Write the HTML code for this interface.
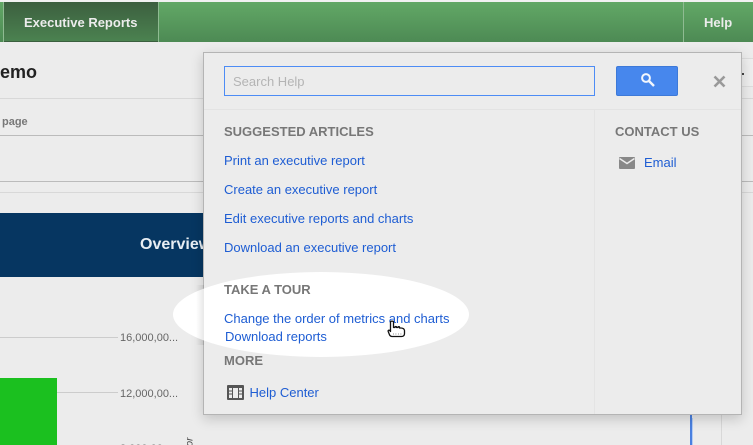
<!DOCTYPE html>
<html>
<head>
<meta charset="utf-8">
<style>
html,body{margin:0;padding:0;width:753px;height:445px;overflow:hidden}
body{background:#ececec;font-family:"Liberation Sans",sans-serif}
#w{position:absolute;left:0;top:0;width:753px;height:445px;overflow:hidden;background:#ececec}
.a{position:absolute}
.t{position:absolute;white-space:nowrap;line-height:16px}
.l{color:#1e5dd3;font-size:13px}
.h{color:#777;font-size:13px;font-weight:bold}
</style>
</head>
<body>
<div id="w">
<!-- top bar -->
<div class="a" style="left:0;top:0;width:753px;height:2px;background:#f2f2f2"></div>
<div class="a" style="left:0;top:2px;width:753px;height:40px;background:linear-gradient(#62a866,#4d8a54)"></div>
<div class="a" style="left:3px;top:2px;width:1px;height:40px;background:#8fbb92"></div>
<div class="a" style="left:4px;top:2px;width:154px;height:39px;background:linear-gradient(#3c5f3f,#4b8250);border-bottom:1px solid #3a5f3e;border-right:1px solid #3a5f3e"></div>
<div class="a" style="left:158px;top:2px;width:1px;height:40px;background:#8fbb92"></div>
<div class="a" style="left:683px;top:2px;width:1px;height:40px;background:#8fbb92"></div>
<div class="t" style="left:24px;top:15px;color:#ececec;font-size:13px;font-weight:bold">Executive Reports</div>
<div class="t" style="left:704px;top:15px;color:#ececec;font-size:13px;font-weight:bold">Help</div>

<!-- page behind -->
<div class="t" style="left:-13px;top:62px;color:#222;font-size:18px;font-weight:bold;line-height:20px">Demo</div>
<div class="a" style="left:0;top:98px;width:753px;height:1px;background:#d8d8d8"></div>
<div class="t" style="left:2px;top:114px;color:#777;font-size:11px;font-weight:bold">page</div>
<div class="a" style="left:0;top:135px;width:753px;height:1px;background:#bbb"></div>
<div class="a" style="left:0;top:181px;width:753px;height:1px;background:#bbb"></div>
<div class="a" style="left:0;top:192px;width:753px;height:1px;background:#d8d8d8"></div>
<div class="a" style="left:741px;top:58px;width:12px;height:27px;background:#efefef;border-top:1px solid #ddd;border-bottom:1px solid #ddd"></div>
<div class="a" style="left:742px;top:73px;width:2px;height:2px;background:#444"></div>
<div class="a" style="left:0;top:213px;width:210px;height:64px;background:#063661"></div>
<div class="t" style="left:140px;top:236px;color:#e8eef3;font-size:16px;font-weight:bold;line-height:18px">Overview</div>
<div class="a" style="left:0;top:337px;width:118px;height:1px;background:#ccc"></div>
<div class="a" style="left:0;top:392px;width:118px;height:1px;background:#ccc"></div>
<div class="a" style="left:0;top:378px;width:57px;height:67px;background:#1bc01f"></div>
<div class="t" style="left:120px;top:330px;color:#666;font-size:11px">16,000,00...</div>
<div class="t" style="left:120px;top:386px;color:#666;font-size:11px">12,000,00...</div>
<div class="t" style="left:120px;top:441px;color:#666;font-size:11px">8,000,00...</div>
<div class="t" style="left:186px;top:434px;color:#444;font-size:10px;font-style:italic;transform:rotate(-90deg);transform-origin:center">or</div>
<div class="a" style="left:690px;top:414px;width:2px;height:31px;background:#4a80e0"></div>
<div class="a" style="left:692px;top:418px;width:1px;height:27px;background:#b5cdf3"></div>
<div class="a" style="left:721px;top:414px;width:1px;height:31px;background:#d8d8d8"></div>

<!-- popup -->
<div class="a" style="left:203px;top:52px;width:537px;height:361px;background:#ececec;border:1px solid #b4b4b4;box-shadow:0 4px 12px rgba(0,0,0,.18)"></div>
<div class="a" style="left:204px;top:109px;width:537px;height:1px;background:#e3e3e3"></div>
<div class="a" style="left:594px;top:110px;width:1px;height:304px;background:#e4e4e4"></div>

<!-- spotlight -->
<div class="a" style="left:173px;top:272px;width:296px;height:85px;border-radius:50%;background:#fff"></div>
<div class="a" style="left:196px;top:285px;width:8px;height:60px;background:linear-gradient(90deg,rgba(0,0,0,0),rgba(0,0,0,.09))"></div>

<!-- search -->
<div class="a" style="left:224px;top:66px;width:369px;height:28px;border:1px solid #4d8cf5;background:#ececec"></div>
<div class="t" style="left:233px;top:74px;color:#b4b4b4;font-size:13px">Search Help</div>
<div class="a" style="left:616px;top:66px;width:60px;height:28px;background:#4787ed;border:1px solid #3d79d8;border-radius:2px"></div>
<svg class="a" style="left:640px;top:72px" width="15" height="16" viewBox="0 0 15 16"><circle cx="6" cy="6" r="3.9" fill="none" stroke="#f2f6fd" stroke-width="2"/><path d="M9 9L14 14" stroke="#f2f6fd" stroke-width="2.4"/></svg>
<svg class="a" style="left:713px;top:75px" width="13" height="13" viewBox="0 0 13 13"><path d="M1.5 1.5L11.5 11.5M11.5 1.5L1.5 11.5" stroke="#999" stroke-width="2.6"/></svg>

<!-- left column -->
<div class="t h" style="left:224px;top:124px">SUGGESTED ARTICLES</div>
<div class="t l" style="left:224px;top:153px">Print an executive report</div>
<div class="t l" style="left:224px;top:182px">Create an executive report</div>
<div class="t l" style="left:224px;top:211px">Edit executive reports and charts</div>
<div class="t l" style="left:224px;top:240px">Download an executive report</div>
<div class="t h" style="left:224px;top:282px">TAKE A TOUR</div>
<div class="t l" style="left:224px;top:311px">Change the order of metrics and charts</div>
<div class="t l" style="left:225px;top:329px">Download reports</div>
<div class="t h" style="left:224px;top:353px">MORE</div>
<svg class="a" style="left:227px;top:385px" width="17" height="15" viewBox="0 0 17 15"><rect width="17" height="15" rx="1" fill="#555"/><rect x="2" y="3" width="13" height="10" fill="#ececec"/><path d="M2 6h3M2 9h3M12 6h3M12 9h3" stroke="#555"/><rect x="5" y="3" width="1" height="10" fill="#555"/><rect x="11" y="3" width="1" height="10" fill="#555"/></svg>
<div class="t l" style="left:249.500px;top:385px">Help Center</div>

<!-- right column -->
<div class="t h" style="left:615px;top:124px">CONTACT US</div>
<svg class="a" style="left:619px;top:157px" width="16" height="12" viewBox="0 0 16 12"><rect width="16" height="12" rx="1" fill="#888"/><path d="M0.5 1.5L8 6.5L15.5 1.5" fill="none" stroke="#ececec" stroke-width="1.5"/></svg>
<div class="t l" style="left:644px;top:155px">Email</div>

<!-- cursor -->
<svg class="a" style="left:387px;top:319px" width="19" height="19" viewBox="0 0 19 19"><path d="M3.500 3C3.500 1.800 6.500 1.800 6.500 3V8.500H8V8C8 7.300 9.500 7.300 9.500 8V8.500H11V8.200C11 7.500 12.500 7.500 12.500 8.200V9H14C15.800 9 17.500 10 17.500 11.500V14.500C17.500 16.500 16.500 17.500 14.500 17.500H5C3.800 17.500 3 16.800 2.500 15.800L1.200 12.500C.8 11.300 2.300 10.700 2.900 11.700L3.500 12.500Z" fill="#fff" stroke="#111" stroke-width="1.300" stroke-linejoin="round"/><path d="M6 15h.8M8.500 15h.8M11 15h.8M13.500 15h.8" stroke="#777"/></svg>
</div>
</body>
</html>
